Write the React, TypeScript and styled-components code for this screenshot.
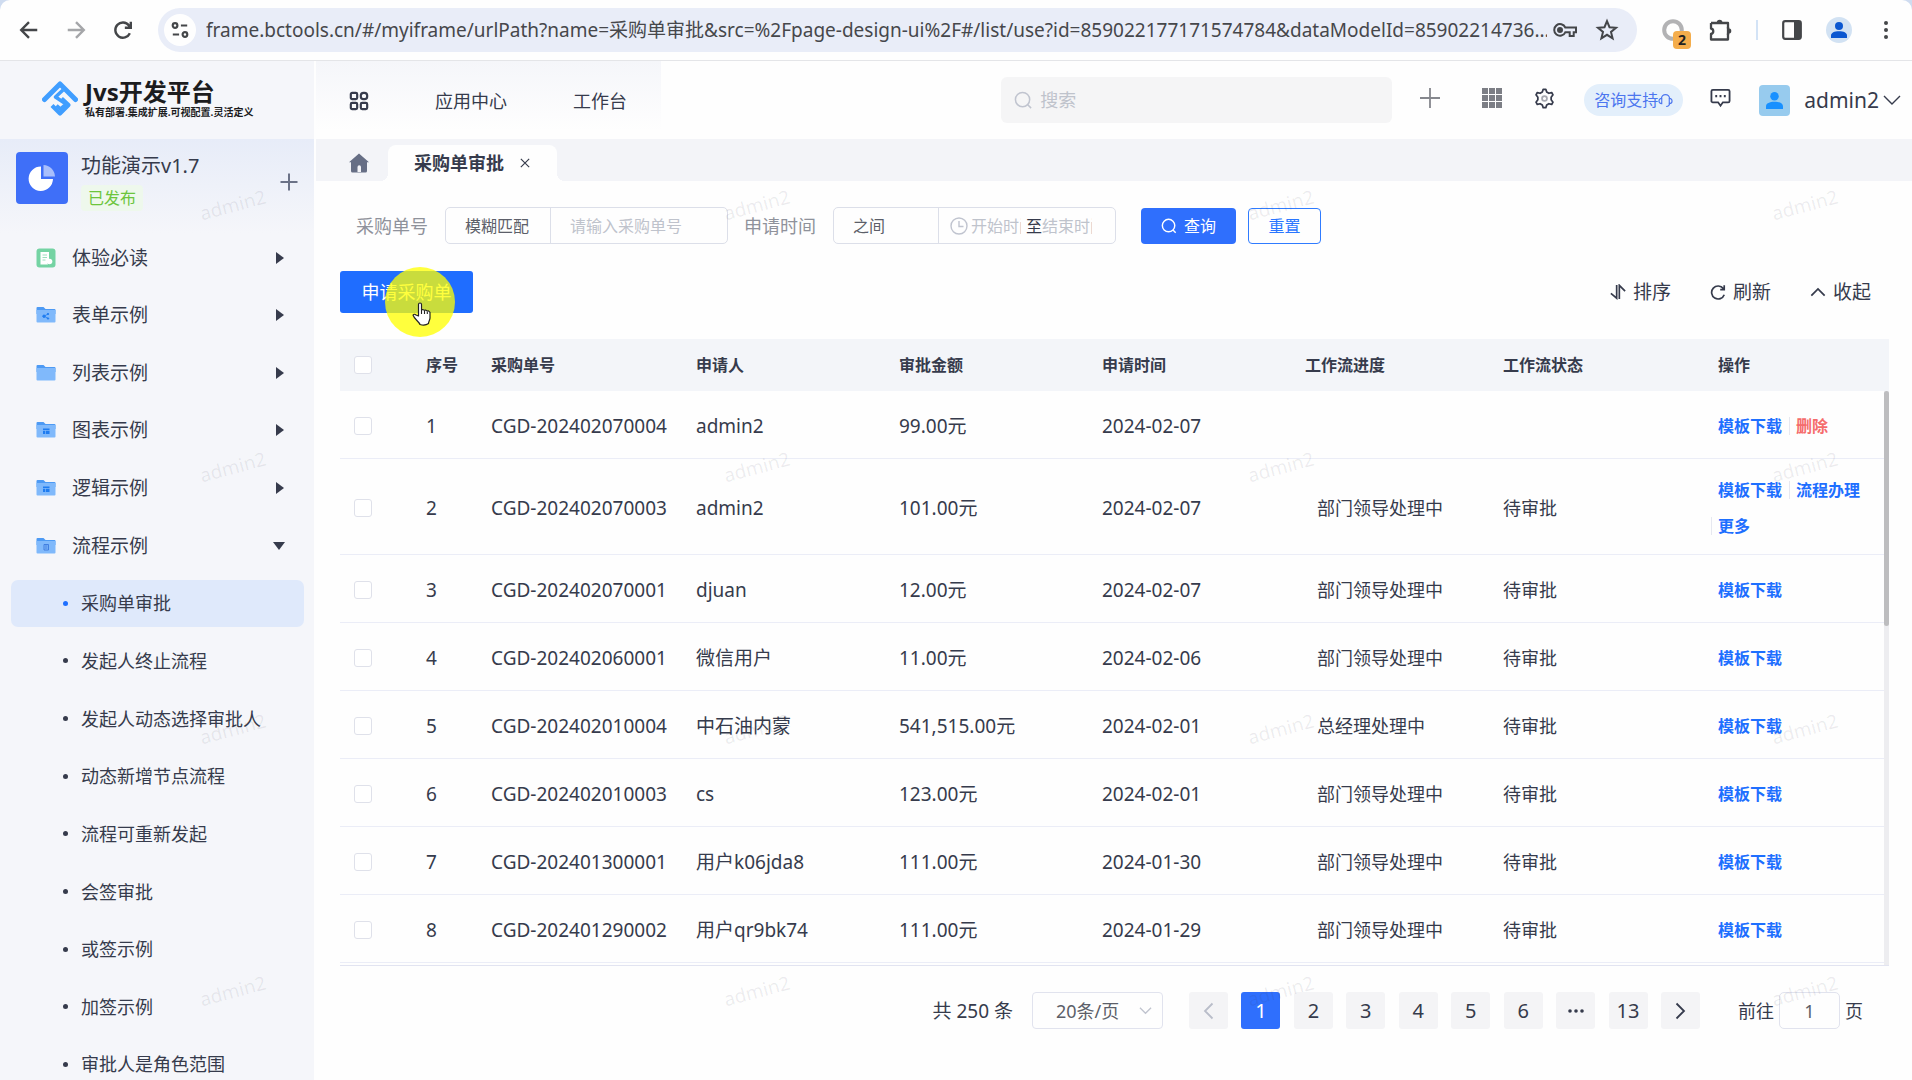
import React from "react";
import styled, { createGlobalStyle, css } from "styled-components";

const GlobalStyle = createGlobalStyle`
  *, *::before, *::after { box-sizing: border-box; }
  html, body { margin: 0; padding: 0; }
  body {
    background: #cfdcf0;
    color: #363b4c;
    font-family: "Noto Sans", "Noto Sans CJK SC", sans-serif;
    font-size: 18px;
    line-height: 24px;
    overflow: hidden;
  }
  button, input, select {
    font: inherit;
    color: inherit;
    margin: 0;
    padding: 0;
    border: 0;
    background: none;
    outline: none;
  }
  button { cursor: pointer; }
  select { appearance: none; }
  a { color: inherit; text-decoration: none; }
  svg { display: block; flex: none; }
  ul { list-style: none; margin: 0; padding: 0; }
`;

/* ---------- window shell ---------- */

const Window = styled.div`
  position: relative;
  display: flex;
  flex-direction: column;
  height: 100vh;
  overflow: hidden;
  border-radius: 10px 10px 0 0;
  background: #fefefe;
`;

const BrowserBar = styled.div`
  flex: none;
  display: flex;
  align-items: center;
  height: 61px;
  padding: 0 16px 0 17px;
  border-bottom: 1px solid #e4e5e8;
  color: #444649;
`;

const BarButton = styled.button<{ $dim?: boolean }>`
  display: grid;
  place-items: center;
  width: 24px;
  height: 24px;
  margin-right: 23px;
  color: ${(p) => (p.$dim ? "#a5a6a9" : "#444649")};
`;

const AddressBox = styled.div`
  flex: 1;
  display: flex;
  align-items: center;
  height: 44px;
  padding: 0 18px 0 6px;
  border-radius: 22px;
  background: #e9edf8;
`;

const SiteInfo = styled.button`
  display: grid;
  place-items: center;
  width: 32px;
  height: 32px;
  border-radius: 50%;
  background: #fefefe;
`;

const AddressInput = styled.input`
  flex: 1;
  min-width: 0;
  margin: 0 6px 0 10px;
  font-size: 19px;
  line-height: 28px;
  color: #46474b;
`;

const IconButton = styled.button`
  display: grid;
  place-items: center;
  color: inherit;
`;

const AddressActions = styled.div`
  display: flex;
  align-items: center;
  gap: 18px;
`;

const BarTools = styled.div`
  display: flex;
  align-items: center;
  gap: 24px;
  padding-left: 24px;
`;

const Extension = styled.button`
  position: relative;
  width: 30px;
  height: 30px;
  margin-right: -7px;
`;

const ExtensionBadge = styled.span`
  position: absolute;
  right: 0;
  bottom: -4px;
  width: 18px;
  height: 18px;
  border-radius: 4px;
  background: #f4ad4c;
  color: #222;
  font-size: 14px;
  font-weight: 700;
  line-height: 18px;
  text-align: center;
`;

const BarDivider = styled.span`
  width: 2px;
  height: 20px;
  background: #d3e3f6;
`;

const Profile = styled.button`
  display: grid;
  place-items: center;
  width: 26px;
  height: 26px;
  border-radius: 50%;
  background: #d2e2f3;
`;

const Body = styled.div`
  flex: 1;
  display: flex;
  min-height: 0;
`;

/* ---------- sidebar ---------- */

const Sidebar = styled.aside`
  flex: none;
  display: flex;
  flex-direction: column;
  width: 314px;
  background: #f5f6fa;
`;

const Brand = styled.div`
  flex: none;
  display: flex;
  align-items: center;
  gap: 7px;
  height: 78px;
  padding: 0 0 2px 42px;
`;

const BrandName = styled.div`
  font-size: 24px;
  line-height: 26px;
  font-weight: 700;
  color: #1c1c1e;
`;

const BrandSlogan = styled.div`
  font-size: 10px;
  line-height: 15px;
  font-weight: 700;
  color: #1c1c1e;
`;

const AppCard = styled.div`
  flex: none;
  display: flex;
  align-items: flex-start;
  height: 94px;
  padding: 13px 15px 0 16px;
  background: linear-gradient(#e7ecf8, #f5f6fa);
`;

const AppIcon = styled.span`
  display: grid;
  place-items: center;
  width: 52px;
  height: 52px;
  border-radius: 4px;
  background: #3f6ff8;
`;

const AppInfo = styled.div`
  flex: 1;
  display: flex;
  flex-direction: column;
  align-items: flex-start;
  gap: 5px;
  padding-left: 13px;
`;

const AppTitle = styled.div`
  font-size: 20px;
  line-height: 28px;
`;

const AppState = styled.span`
  height: 26px;
  padding: 0 7px;
  border-radius: 4px;
  background: #eef8ec;
  color: #6cc53c;
  font-size: 16px;
  line-height: 26px;
`;

const AppAdd = styled(IconButton)`
  margin-top: 20px;
  color: #6b7287;
`;

const Menu = styled.nav`
  flex: 1;
  min-height: 0;
  margin: 1px 0 -8px;
`;

const MenuList = styled.ul`
  display: flex;
  flex-direction: column;
  justify-content: space-between;
  height: 100%;
`;

const rowBase = css`
  display: flex;
  align-items: center;
  width: calc(100% - 21px);
  height: 47px;
  margin-left: 11px;
  border-radius: 7px;
  text-align: left;
`;

const GroupRow = styled.button`
  ${rowBase}
  gap: 16px;
  padding: 0 19px 0 25px;
  font-size: 19px;
`;

const GroupName = styled.span`
  flex: 1;
`;

const Caret = styled.span<{ $open?: boolean }>`
  width: 0;
  height: 0;
  border-style: solid;
  ${(p) =>
    p.$open
      ? css`
          border-width: 8px 6px 0 6px;
          border-color: #363b4c transparent transparent;
        `
      : css`
          margin-right: 1px;
          border-width: 6px 0 6px 8px;
          border-color: transparent transparent transparent #363b4c;
        `}
`;

const LeafRow = styled.a<{ $active?: boolean }>`
  ${rowBase}
  gap: 13px;
  padding: 0 8px 0 52px;
  font-size: 18px;
  white-space: nowrap;
  background: ${(p) => (p.$active ? "#dfe9fb" : "transparent")};
  &::before {
    content: "";
    width: 5px;
    height: 5px;
    border-radius: 50%;
    background: ${(p) => (p.$active ? "#1e6fff" : "#363b4c")};
  }
`;

/* ---------- top bar ---------- */

const Main = styled.main`
  flex: 1;
  display: flex;
  flex-direction: column;
  min-width: 0;
  margin-left: 2px;
`;

const TopBar = styled.header`
  flex: none;
  display: flex;
  align-items: center;
  justify-content: space-between;
  height: 78px;
  padding-right: 11px;
`;

const TopNav = styled.nav`
  display: flex;
  align-items: center;
  align-self: flex-start;
  width: 345px;
  height: 70px;
  padding: 10px 0 0 33px;
  background: linear-gradient(#f5f6fa, #fefefe);
`;

const NavLink = styled.a`
  margin-left: 66px;
  white-space: nowrap;
`;

const TopTools = styled.div`
  display: flex;
  align-items: center;
  color: #363b4c;
`;

const SearchBox = styled.label`
  display: flex;
  align-items: center;
  gap: 7px;
  width: 391px;
  height: 46px;
  margin-right: 28px;
  padding: 0 13px;
  border-radius: 6px;
  background: #f5f5f6;
  color: #c0c4cf;
`;

const PlainInput = styled.input`
  flex: 1;
  min-width: 0;
  width: 100%;
  &::placeholder { color: #bfc3cc; opacity: 1; }
`;

const ToolSlot = styled(IconButton)<{ $gap: number }>`
  margin-right: ${(p) => p.$gap}px;
  margin-bottom: 4px;
`;

const SupportPill = styled.button`
  display: flex;
  align-items: center;
  height: 32px;
  margin-right: 27px;
  padding: 0 10px;
  border-radius: 16px;
  background: #e3effb;
  color: #4c76ef;
  font-size: 16px;
`;

const UserAvatar = styled.span`
  display: grid;
  place-items: center;
  width: 31px;
  height: 31px;
  margin-right: 14px;
  border-radius: 4px;
  background: #97cbee;
`;

const UserMenu = styled.button`
  display: flex;
  align-items: center;
  gap: 4px;
  font-size: 21px;
`;

/* ---------- tabs ---------- */

const TabBar = styled.div`
  flex: none;
  display: flex;
  align-items: flex-end;
  height: 42px;
  background: #f3f4f8;
`;

const HomeTab = styled.button`
  display: grid;
  place-items: center;
  width: 72px;
  height: 36px;
  padding: 0 19px 0 32px;
  color: #666e85;
`;

const ActiveTab = styled.div`
  position: relative;
  display: flex;
  align-items: center;
  justify-content: space-between;
  width: 169px;
  height: 36px;
  padding: 0 27px 0 26px;
  border-radius: 8px 8px 0 0;
  background: #fefefe;
  font-weight: 700;
  &::before, &::after {
    content: "";
    position: absolute;
    bottom: 0;
    width: 8px;
    height: 8px;
  }
  &::before {
    left: -8px;
    background: radial-gradient(circle at 0 0, transparent 8px, #fefefe 8px);
  }
  &::after {
    right: -8px;
    background: radial-gradient(circle at 100% 0, transparent 8px, #fefefe 8px);
  }
`;

/* ---------- content ---------- */

const Content = styled.section`
  flex: 1;
  display: flex;
  flex-direction: column;
  min-height: 0;
  padding: 26px 23px 51px 24px;
`;

const Filters = styled.form`
  flex: none;
  display: flex;
  align-items: center;
  height: 37px;
  padding-left: 16px;
`;

const FilterLabel = styled.label`
  margin-right: 17px;
  color: #8f929b;
  white-space: nowrap;
`;

const FieldGroup = styled.div<{ $gap: number }>`
  display: flex;
  width: 283px;
  height: 37px;
  margin-right: ${(p) => p.$gap}px;
  border: 1px solid #dcdfe9;
  border-radius: 5px;
  font-size: 16px;
`;

const MatchSelect = styled.select`
  width: 105px;
  padding-left: 19px;
  border-right: 1px solid #dcdfe9;
  color: #5c5f69;
`;

const KeywordInput = styled(PlainInput)`
  padding-left: 19px;
`;

const RangeBox = styled.div`
  flex: 1;
  display: flex;
  align-items: center;
  padding-left: 11px;
  color: #c0c4cf;
`;

const RangeInput = styled(PlainInput)`
  flex: none;
  width: 50px;
`;

const RangeStart = styled(RangeInput)`
  margin: 0 5px 0 3px;
`;

const RangeWord = styled.span`
  color: #363b4c;
`;

const SearchButton = styled.button`
  display: flex;
  align-items: center;
  justify-content: center;
  gap: 7px;
  width: 95px;
  height: 36px;
  margin-right: 12px;
  border-radius: 4px;
  background: #2f6ffd;
  color: #fff;
  font-size: 16px;
`;

const ResetButton = styled.button`
  width: 73px;
  height: 36px;
  border: 1px solid #2f7bff;
  border-radius: 4px;
  color: #2a76ff;
  font-size: 16px;
`;

const Toolbar = styled.div`
  flex: none;
  display: flex;
  align-items: center;
  justify-content: space-between;
  margin: 27px 0 26px;
  padding-right: 18px;
`;

const CreateWrap = styled.div`
  position: relative;
`;

const CreateButton = styled.button`
  height: 42px;
  width: 133px;
  border-radius: 3px;
  background: #1f6dff;
  color: #fff;
`;

/* Click highlight drawn over the primary action. */
const PointerHalo = styled.span`
  position: absolute;
  left: 45px;
  top: -4px;
  width: 70px;
  height: 70px;
  border-radius: 50%;
  background: rgba(255, 255, 0, 0.76);
  pointer-events: none;
`;

const PointerHand = styled.svg`
  position: absolute;
  left: 72px;
  top: 31px;
  pointer-events: none;
`;

const ToolbarActions = styled.div`
  display: flex;
  gap: 39px;
`;

const TextAction = styled.button`
  display: flex;
  align-items: center;
  gap: 7px;
  font-size: 19px;
`;

/* ---------- table ---------- */

const TableArea = styled.div`
  position: relative;
  flex: 1;
  min-height: 0;
  overflow: hidden;
  border-bottom: 1px solid #e2e4f1;
`;

const Table = styled.table`
  width: 100%;
  border-collapse: separate;
  border-spacing: 0;
  table-layout: fixed;
`;

const Th = styled.th`
  height: 52px;
  padding: 0 0 0 12px;
  background: #f3f5f9;
  font-size: 16px;
  font-weight: 700;
  text-align: left;
  white-space: nowrap;
`;

const Td = styled.td<{ $indent?: boolean; $tall?: boolean }>`
  height: ${(p) => (p.$tall ? 96 : 68)}px;
  padding: 2px 0 0 ${(p) => (p.$indent ? 24 : 12)}px;
  border-bottom: 1px solid #ebedf7;
  white-space: nowrap;
`;

const NumTd = styled(Td)`
  font-size: 19px;
`;

const Tick = styled.input`
  appearance: none;
  display: block;
  width: 18px;
  height: 18px;
  margin-left: 2px;
  border: 1px solid #dfe1ea;
  border-radius: 3px;
  background: #fff;
`;

const RowActions = styled.div`
  display: flex;
  flex-wrap: wrap;
  row-gap: 18px;
  margin-left: -7px;
  padding-right: 6px;
`;

const RowAction = styled.a<{ $danger?: boolean }>`
  padding: 0 7px 0 6px;
  border-left: 1px solid #e6e8f0;
  color: ${(p) => (p.$danger ? "#f56c6c" : "#1e6fff")};
  font-size: 16px;
  line-height: 18px;
  font-weight: 700;
  &:first-child { border-color: transparent; }
`;

const ScrollTrack = styled.div`
  position: absolute;
  top: 52px;
  right: 0;
  bottom: 0;
  width: 5px;
  background: #ededf0;
`;

const ScrollThumb = styled.div`
  height: 41%;
  border-radius: 3px;
  background: #bdbdbf;
`;

/* ---------- pagination ---------- */

const Pagination = styled.div`
  flex: none;
  display: flex;
  align-items: center;
  justify-content: flex-end;
  height: 37px;
  margin-top: 26px;
  padding-right: 26px;
`;

const PageTotal = styled.span`
  font-size: 19px;
`;

const PageSize = styled.label`
  position: relative;
  display: flex;
  align-items: center;
  width: 131px;
  height: 37px;
  margin: 0 26px 0 19px;
  border: 1px solid #e1e3ee;
  border-radius: 4px;
  color: #5c5f69;
  & > select {
    width: 100%;
    height: 100%;
    padding-left: 23px;
  }
  & > svg {
    position: absolute;
    right: 10px;
    color: #c0c4cf;
    pointer-events: none;
  }
`;

const Pager = styled.div`
  display: flex;
  justify-content: space-between;
  width: 511px;
  margin-right: 38px;
`;

const PageButton = styled.button<{ $active?: boolean; $dim?: boolean }>`
  display: grid;
  place-items: center;
  width: 39px;
  height: 37px;
  border-radius: 3px;
  font-size: 20px;
  background: ${(p) => (p.$active ? "#2f6ffd" : "#f4f4f6")};
  color: ${(p) => (p.$active ? "#fff" : p.$dim ? "#b9bdc9" : "#363b4c")};
`;

const JumpLabel = styled.label`
  display: flex;
  align-items: center;
  gap: 5px;
`;

const JumpInput = styled.input`
  width: 61px;
  height: 37px;
  border: 1px solid #e1e3ee;
  border-radius: 5px;
  text-align: center;
  color: #5c5f69;
`;

/* ---------- watermark ---------- */

const WatermarkLayer = styled.div`
  position: absolute;
  inset: 74px 0 0 -29px;
  display: grid;
  grid-template-columns: repeat(4, 524px);
  grid-auto-rows: 262px;
  overflow: hidden;
  pointer-events: none;
  user-select: none;
`;

const Watermark = styled.span`
  place-self: center;
  color: rgba(60, 60, 80, 0.09);
  font-size: 19px;
  transform: rotate(-15deg);
`;

/* ---------- icons ---------- */

type IconProps = { size?: number; children: React.ReactNode; stroke?: number; box?: number };

const Line = ({ size = 20, stroke = 2, box = 24, children }: IconProps) => (
  <svg width={size} height={size} viewBox={`0 0 ${box} ${box}`} fill="none" stroke="currentColor" strokeWidth={stroke} aria-hidden="true">
    {children}
  </svg>
);

const PersonShape = ({ size, color }: { size: number; color: string }) => (
  <svg width={size} height={size} viewBox="0 0 16 16" fill={color} aria-hidden="true">
    <circle cx="8" cy="4" r="4" />
    <path d="M0 16v-2.600c0-2.700 3.400-4.200 8-4.200s8 1.500 8 4.200V16z" />
  </svg>
);

const LogoMark = () => (
  <svg width="36" height="38" viewBox="0 0 36 38" fill="none" stroke="#409eff" aria-hidden="true">
    <path d="M2.500 19.500 18 4l15.500 15.500" strokeWidth="5" strokeLinejoin="round" strokeLinecap="round" />
    <path d="m21 10-7.500 7 10.500 7-5.500 5-4-3.500" strokeWidth="3.600" strokeLinejoin="round" />
    <path d="m10 25.500 8 8 8.500-8.500-7-6.500" strokeWidth="4.200" strokeLinejoin="round" />
  </svg>
);

const DocIcon = () => (
  <svg width="20" height="20" viewBox="0 0 20 20" aria-hidden="true">
    <rect x=".5" y=".5" width="19" height="19" rx="3" fill="#74d3a3" />
    <path d="M4.500 4h8.500v7.500a3.500 3.500 0 0 0-1 5H4.500z" fill="#fff" />
    <path d="M6.500 7h4.500M6.500 9.500h4.500M6.500 12h3" stroke="#9be0bd" />
    <circle cx="13.500" cy="13.500" r="2.800" fill="#fff" />
  </svg>
);

const FolderIcon = ({ mark }: { mark: string }) => (
  <svg width="20" height="18" viewBox="0 0 20 18" aria-hidden="true">
    <path d="M.5 2a1 1 0 0 1 1-1h6l2 2h9a1 1 0 0 1 1 1v4H.5z" fill="#4d9af4" />
    <path d="M.5 4h19v11.500a1 1 0 0 1-1 1h-17a1 1 0 0 1-1-1z" fill="#80b9fb" />
    {mark === "share" && (
      <g fill="#1f7cf0" stroke="#1f7cf0">
        <path d="m12 8-4 2.200 4 2.200" fill="none" strokeWidth=".8" />
        <circle cx="8" cy="10.200" r="1.200" />
        <circle cx="12" cy="8" r=".7" />
        <circle cx="12" cy="12.500" r=".7" />
      </g>
    )}
    {mark === "grid" && (
      <path d="M7 7.500h6.500V9H7zM7 9.800h2V13H7zM9.700 9.800h3.800V13H9.700z" fill="#1f7cf0" />
    )}
    {mark === "doc" && (
      <path d="M8 7.500h4.500V13H8zM9 9h2.500M9 11h2.500" fill="#80b9fb" stroke="#3a78dc" strokeWidth=".9" />
    )}
  </svg>
);

/* ---------- data ---------- */

const groups = [
  { name: "体验必读", icon: <DocIcon /> },
  { name: "表单示例", icon: <FolderIcon mark="share" /> },
  { name: "列表示例", icon: <FolderIcon mark="" /> },
  { name: "图表示例", icon: <FolderIcon mark="grid" /> },
  { name: "逻辑示例", icon: <FolderIcon mark="grid" /> },
  { name: "流程示例", icon: <FolderIcon mark="doc" />, open: true },
];

const leaves = [
  "采购单审批",
  "发起人终止流程",
  "发起人动态选择审批人",
  "动态新增节点流程",
  "流程可重新发起",
  "会签审批",
  "或签示例",
  "加签示例",
  "审批人是角色范围",
];

const columns: [string, number][] = [
  ["", 74],
  ["序号", 65],
  ["采购单号", 205],
  ["申请人", 203],
  ["审批金额", 203],
  ["申请时间", 203],
  ["工作流进度", 198],
  ["工作流状态", 215],
  ["操作", 183],
];

type Row = { no: string; user: string; amount: string; date: string; step: string; state: string; actions?: string[] };

const rows: Row[] = [
  { no: "CGD-202402070004", user: "admin2", amount: "99.00元", date: "2024-02-07", step: "", state: "", actions: ["模板下载", "删除"] },
  { no: "CGD-202402070003", user: "admin2", amount: "101.00元", date: "2024-02-07", step: "部门领导处理中", state: "待审批", actions: ["模板下载", "流程办理", "更多"] },
  { no: "CGD-202402070001", user: "djuan", amount: "12.00元", date: "2024-02-07", step: "部门领导处理中", state: "待审批" },
  { no: "CGD-202402060001", user: "微信用户", amount: "11.00元", date: "2024-02-06", step: "部门领导处理中", state: "待审批" },
  { no: "CGD-202402010004", user: "中石油内蒙", amount: "541,515.00元", date: "2024-02-01", step: "总经理处理中", state: "待审批" },
  { no: "CGD-202402010003", user: "cs", amount: "123.00元", date: "2024-02-01", step: "部门领导处理中", state: "待审批" },
  { no: "CGD-202401300001", user: "用户k06jda8", amount: "111.00元", date: "2024-01-30", step: "部门领导处理中", state: "待审批" },
  { no: "CGD-202401290002", user: "用户qr9bk74", amount: "111.00元", date: "2024-01-29", step: "部门领导处理中", state: "待审批" },
];

const pages = ["1", "2", "3", "4", "5", "6", "more", "13"];

/* ---------- parts ---------- */

const Browser = () => (
  <BrowserBar>
    <BarButton aria-label="后退">
      <Line size={22} stroke={2.6}><path d="M21 12H4M12 3.500 3.500 12l8.500 8.500" /></Line>
    </BarButton>
    <BarButton aria-label="前进" $dim>
      <Line size={22} stroke={2.6}><path d="M3 12h17M12 3.500l8.500 8.500-8.500 8.500" /></Line>
    </BarButton>
    <BarButton aria-label="重新加载">
      <Line size={22} stroke={2.6}><path d="M19.500 15.500A8.300 8.300 0 1 1 18.500 7l1.500 2M20.500 3v6.500H14" /></Line>
    </BarButton>
    <AddressBox>
      <SiteInfo aria-label="网站信息">
        <Line size={18} stroke={2.4} box={20}>
          <circle cx="4.500" cy="5" r="2.600" /><path d="M11 5h7M2 15h7" /><circle cx="15.500" cy="15" r="2.600" />
        </Line>
      </SiteInfo>
      <AddressInput
        aria-label="地址栏"
        readOnly
        value="frame.bctools.cn/#/myiframe/urlPath?name=采购单审批&src=%2Fpage-design-ui%2F#/list/use?id=859022177171574784&dataModelId=85902214736..."
      />
      <AddressActions>
        <IconButton aria-label="密码">
          <svg width="24" height="16" viewBox="0 0 24 16" fill="none" stroke="currentColor" strokeWidth="2" aria-hidden="true">
            <path d="M12.300 5.500H23v4.800h-2.300V14h-4v-3.700h-4.400A5.800 5.800 0 1 1 12.300 5.500z" />
            <circle cx="7" cy="8" r="2" fill="currentColor" />
          </svg>
        </IconButton>
        <IconButton aria-label="收藏">
          <Line size={24} stroke={2}><path d="m12 3.200 2.500 6 6.500.5-5 4.200 1.600 6.400L12 16.800l-5.600 3.500L8 13.900 3 9.700l6.500-.5z" /></Line>
        </IconButton>
      </AddressActions>
    </AddressBox>
    <BarTools>
      <Extension aria-label="扩展通知">
        <Line size={24} stroke={4}><circle cx="12" cy="12" r="8.800" stroke="#b2b2b4" /></Line>
        <ExtensionBadge>2</ExtensionBadge>
      </Extension>
      <IconButton aria-label="扩展程序">
        <svg width="24" height="24" viewBox="0 0 24 24" aria-hidden="true">
          <path
            d="M3 5h17v5.500M20 15.500V21.500H3v-5.500a2.800 2.800 0 0 0 0-5.500V5"
            fill="none" stroke="currentColor" strokeWidth="2.300" strokeLinejoin="round"
          />
          <path d="M20 9v8" stroke="currentColor" strokeWidth="2.300" />
          <path d="M8.800 4.500a2.800 2.800 0 0 1 5.600 0zM20.500 10.200a2.800 2.800 0 0 1 0 5.600z" fill="currentColor" />
        </svg>
      </IconButton>
      <BarDivider />
      <IconButton aria-label="侧边栏">
        <svg width="20" height="20" viewBox="0 0 20 20" aria-hidden="true">
          <rect x="1.200" y="1.200" width="17.600" height="17.600" rx="2" fill="none" stroke="currentColor" strokeWidth="2.200" />
          <path d="M12 1h7v18h-7z" fill="currentColor" />
        </svg>
      </IconButton>
      <Profile aria-label="个人资料"><PersonShape size={16} color="#0b57d0" /></Profile>
      <IconButton aria-label="更多选项">
        <svg width="20" height="20" viewBox="0 0 20 20" fill="currentColor" aria-hidden="true">
          <circle cx="10" cy="3" r="2" /><circle cx="10" cy="10" r="2" /><circle cx="10" cy="17" r="2" />
        </svg>
      </IconButton>
    </BarTools>
  </BrowserBar>
);

const SideMenu = () => (
  <Sidebar>
    <Brand>
      <LogoMark />
      <div>
        <BrandName>Jvs开发平台</BrandName>
        <BrandSlogan>私有部署.集成扩展.可视配置.灵活定义</BrandSlogan>
      </div>
    </Brand>
    <AppCard>
      <AppIcon>
        <svg width="28" height="28" viewBox="0 0 28 28" aria-hidden="true">
          <path d="M13 2.500v12.500h12A12.200 12.200 0 1 1 13 2.500z" fill="#fff" />
          <path d="M15.500 1A12 12 0 0 1 27 12.500H15.500z" fill="#a9bffc" />
        </svg>
      </AppIcon>
      <AppInfo>
        <AppTitle>功能演示v1.7</AppTitle>
        <AppState>已发布</AppState>
      </AppInfo>
      <AppAdd aria-label="新增">
        <Line size={20} stroke={2} box={20}><path d="M10 1.500v17M1.500 10h17" /></Line>
      </AppAdd>
    </AppCard>
    <Menu aria-label="应用菜单">
      <MenuList>
        {groups.map((g) => (
          <li key={g.name}>
            <GroupRow aria-expanded={!!g.open}>
              {g.icon}
              <GroupName>{g.name}</GroupName>
              <Caret $open={g.open} />
            </GroupRow>
          </li>
        ))}
        {leaves.map((name, i) => (
          <li key={name}>
            <LeafRow href="#" $active={i === 0}>{name}</LeafRow>
          </li>
        ))}
      </MenuList>
    </Menu>
  </Sidebar>
);

const Header = () => (
  <TopBar>
    <TopNav>
      <IconButton aria-label="应用列表">
        <Line size={20} stroke={2.4} box={22}>
          <rect x="2" y="2" width="7" height="7" rx="1.500" /><rect x="13" y="2" width="7" height="7" rx="3" />
          <rect x="2" y="13" width="7" height="7" rx="1.500" /><rect x="13" y="13" width="7" height="7" rx="1.500" />
        </Line>
      </IconButton>
      <NavLink href="#">应用中心</NavLink>
      <NavLink href="#">工作台</NavLink>
    </TopNav>
    <TopTools>
      <SearchBox>
        <Line size={19} stroke={1.6} box={20}><circle cx="9" cy="9" r="7.500" /><path d="m14.500 14.500 3.500 3.500" /></Line>
        <PlainInput placeholder="搜索" aria-label="搜索" />
      </SearchBox>
      <ToolSlot aria-label="新建" $gap={42}>
        <Line size={20} stroke={1.8} box={20}><path d="M10 0v20M0 10h20" stroke="#85878d" /></Line>
      </ToolSlot>
      <ToolSlot aria-label="应用" $gap={32}>
        <svg width="20" height="20" viewBox="0 0 20 20" fill="#7c7e85" aria-hidden="true">
          {[0, 7, 14].map((y) => [0, 7, 14].map((x) => <rect key={`${x}-${y}`} x={x} y={y} width="6" height="6" />))}
        </svg>
      </ToolSlot>
      <ToolSlot aria-label="设置" $gap={29}>
        <Line size={21} stroke={2}>
          <path d="M9.500 4.500 10.500 1.500h3l1 3 2.500 1.500 3.200-.8 1.500 2.600L19.600 10.500v3l2.100 2.700-1.500 2.600-3.200-.8-2.500 1.500-1 3h-3l-1-3L7 18l-3.200.8-1.500-2.600 2.100-2.700v-3L2.300 7.800l1.500-2.600L7 6z" strokeLinejoin="round" />
          <circle cx="12" cy="12" r="2.800" stroke="#a6a8b0" />
        </Line>
      </ToolSlot>
      <SupportPill>
        咨询支持
        <Line size={15} stroke={1.8}>
          <path d="M5.500 9a6.500 6.500 0 0 1 13 0M18.500 16c0 3.500-2 5.500-5.500 5.500" />
          <path d="M6 8.500v8.500c-3 0-4.500-1.800-4.500-4.200S3 8.500 6 8.500zM18 8.500v8.500c3 0 4.500-1.800 4.500-4.200S21 8.500 18 8.500z" />
        </Line>
      </SupportPill>
      <ToolSlot aria-label="消息" $gap={28}>
        <Line size={21} stroke={1.900} box={22}>
          <path d="M3 2h16a1.500 1.500 0 0 1 1.500 1.500v10A1.500 1.500 0 0 1 19 15h-5.500L11 18.500 8.500 15H3a1.500 1.500 0 0 1-1.500-1.500v-10A1.500 1.500 0 0 1 3 2z" />
          <path d="M5.500 8.500h2M10 8.500h2M14.500 8.500h2" strokeWidth="2.200" />
        </Line>
      </ToolSlot>
      <UserAvatar><PersonShape size={17} color="#1890ff" /></UserAvatar>
      <UserMenu>
        admin2
        <Line size={18} stroke={1.4} box={18}><path d="m1 5 8 8 8-8" /></Line>
      </UserMenu>
    </TopTools>
  </TopBar>
);

const Tabs = () => (
  <TabBar>
    <HomeTab aria-label="首页">
      <svg width="20" height="20" viewBox="0 0 20 20" fill="currentColor" aria-hidden="true">
        <path d="M10 .5 20 9.200h-2V18a1.500 1.500 0 0 1-1.500 1.500h-13A1.500 1.500 0 0 1 2 18V9.200H0z" />
        <path d="M8.500 19v-5a1.500 1.500 0 0 1 3.500 0v5z" fill="#f3f4f8" />
      </svg>
    </HomeTab>
    <ActiveTab>
      采购单审批
      <IconButton aria-label="关闭标签">
        <Line size={10} stroke={1.4} box={12}><path d="m1 1 10 10M11 1 1 11" /></Line>
      </IconButton>
    </ActiveTab>
  </TabBar>
);

const FilterBar = () => (
  <Filters onSubmit={(e) => e.preventDefault()}>
    <FilterLabel htmlFor="order-no">采购单号</FilterLabel>
    <FieldGroup $gap={16}>
      <MatchSelect aria-label="采购单号匹配方式"><option>模糊匹配</option></MatchSelect>
      <KeywordInput id="order-no" placeholder="请输入采购单号" />
    </FieldGroup>
    <FilterLabel htmlFor="date-from">申请时间</FilterLabel>
    <FieldGroup $gap={25}>
      <MatchSelect aria-label="申请时间匹配方式"><option>之间</option></MatchSelect>
      <RangeBox>
        <Line size={18} stroke={1.4} box={18}><circle cx="9" cy="9" r="8" /><path d="M9 4v5.500h4.500" /></Line>
        <RangeStart id="date-from" placeholder="开始时间" />
        <RangeWord>至</RangeWord>
        <RangeInput aria-label="结束时间" placeholder="结束时间" />
      </RangeBox>
    </FieldGroup>
    <SearchButton type="submit">
      <Line size={16} stroke={1.6} box={18}><circle cx="8.500" cy="8.500" r="7" /><path d="m13.500 13.500 3 3" /></Line>
      查询
    </SearchButton>
    <ResetButton type="reset">重置</ResetButton>
  </Filters>
);

const ListToolbar = () => (
  <Toolbar>
    <CreateWrap>
      <CreateButton>申请采购单</CreateButton>
      <PointerHalo />
      <PointerHand width="19" height="24" viewBox="0 0 19 24" aria-hidden="true">
        <path
          d="M6.500 14V2.500a1.500 1.500 0 0 1 3 0V8l1-.5 2 .8 1-.3 1.800 1 1.200-.2 1.500 1.500V16c0 2-1.500 3.500-1.500 5.500-2 1.500-6 1.700-8.500 1C7 19.500 2.500 17.500 1 13c.8-1 2-1 3 0z"
          fill="#fff" stroke="#222" strokeWidth="1.200" strokeLinejoin="round"
        />
        <path d="M9.500 8v4M12.500 8.500V12M15.300 9.500V12" stroke="#222" strokeWidth="1.100" />
      </PointerHand>
    </CreateWrap>
    <ToolbarActions>
      <TextAction>
        <Line size={16} stroke={1.900} box={18}><path d="M7.500 1v15L1 10.500M10.500 17V1.500L17 8" /></Line>
        排序
      </TextAction>
      <TextAction>
        <Line size={16} stroke={1.900} box={18}><path d="M16 12A7.300 7.300 0 1 1 15 5.200M16 1.500v4.800h-4.500" /></Line>
        刷新
      </TextAction>
      <TextAction>
        <Line size={16} stroke={2} box={18}><path d="m1.500 13 7.500-7.500 7.500 7.500" /></Line>
        收起
      </TextAction>
    </ToolbarActions>
  </Toolbar>
);

const OrderTable = () => (
  <TableArea>
    <Table>
      <colgroup>
        {columns.map(([name, width]) => <col key={name} style={{ width }} />)}
      </colgroup>
      <thead>
        <tr>
          {columns.map(([name]) => (
            <Th key={name} scope="col">{name || <Tick type="checkbox" aria-label="全选" />}</Th>
          ))}
        </tr>
      </thead>
      <tbody>
        {rows.map((r, i) => {
          const actions = r.actions ?? ["模板下载"];
          const tall = actions.length > 2;
          return (
            <tr key={r.no}>
              <Td $tall={tall}><Tick type="checkbox" aria-label={`选择 ${r.no}`} /></Td>
              <NumTd $tall={tall}>{i + 1}</NumTd>
              <NumTd $tall={tall}>{r.no}</NumTd>
              <NumTd $tall={tall}>{r.user}</NumTd>
              <NumTd $tall={tall}>{r.amount}</NumTd>
              <NumTd $tall={tall}>{r.date}</NumTd>
              <Td $tall={tall} $indent>{r.step}</Td>
              <Td $tall={tall}>{r.state}</Td>
              <Td $tall={tall}>
                <RowActions>
                  {actions.map((a) => <RowAction key={a} href="#" $danger={a === "删除"}>{a}</RowAction>)}
                </RowActions>
              </Td>
            </tr>
          );
        })}
      </tbody>
    </Table>
    <ScrollTrack><ScrollThumb /></ScrollTrack>
  </TableArea>
);

const PageBar = () => (
  <Pagination>
    <PageTotal>共 250 条</PageTotal>
    <PageSize>
      <select aria-label="每页条数"><option>20条/页</option></select>
      <Line size={13} stroke={1.4} box={14}><path d="m1 4 6 6 6-6" /></Line>
    </PageSize>
    <Pager>
      <PageButton aria-label="上一页" $dim>
        <Line size={18} stroke={1.8} box={18}><path d="m12.500 1.500-7.500 7.500 7.500 7.500" /></Line>
      </PageButton>
      {pages.map((p) => (
        <PageButton key={p} $active={p === "1"} aria-label={p === "more" ? "更多页" : undefined}>
          {p === "more" ? (
            <svg width="16" height="4" viewBox="0 0 16 4" fill="currentColor" aria-hidden="true">
              <circle cx="2" cy="2" r="1.800" /><circle cx="8" cy="2" r="1.800" /><circle cx="14" cy="2" r="1.800" />
            </svg>
          ) : p}
        </PageButton>
      ))}
      <PageButton aria-label="下一页">
        <Line size={18} stroke={1.8} box={18}><path d="m5.500 1.500 7.500 7.500-7.500 7.500" /></Line>
      </PageButton>
    </Pager>
    <JumpLabel>
      前往
      <JumpInput defaultValue="1" />
      页
    </JumpLabel>
  </Pagination>
);

export default function App() {
  return (
    <>
      <GlobalStyle />
      <Window>
        <Browser />
        <Body>
          <SideMenu />
          <Main>
            <Header />
            <Tabs />
            <Content>
              <FilterBar />
              <ListToolbar />
              <OrderTable />
              <PageBar />
            </Content>
          </Main>
        </Body>
        <WatermarkLayer aria-hidden="true">
          {Array.from({ length: 16 }, (_, i) => <Watermark key={i}>admin2</Watermark>)}
        </WatermarkLayer>
      </Window>
    </>
  );
}
